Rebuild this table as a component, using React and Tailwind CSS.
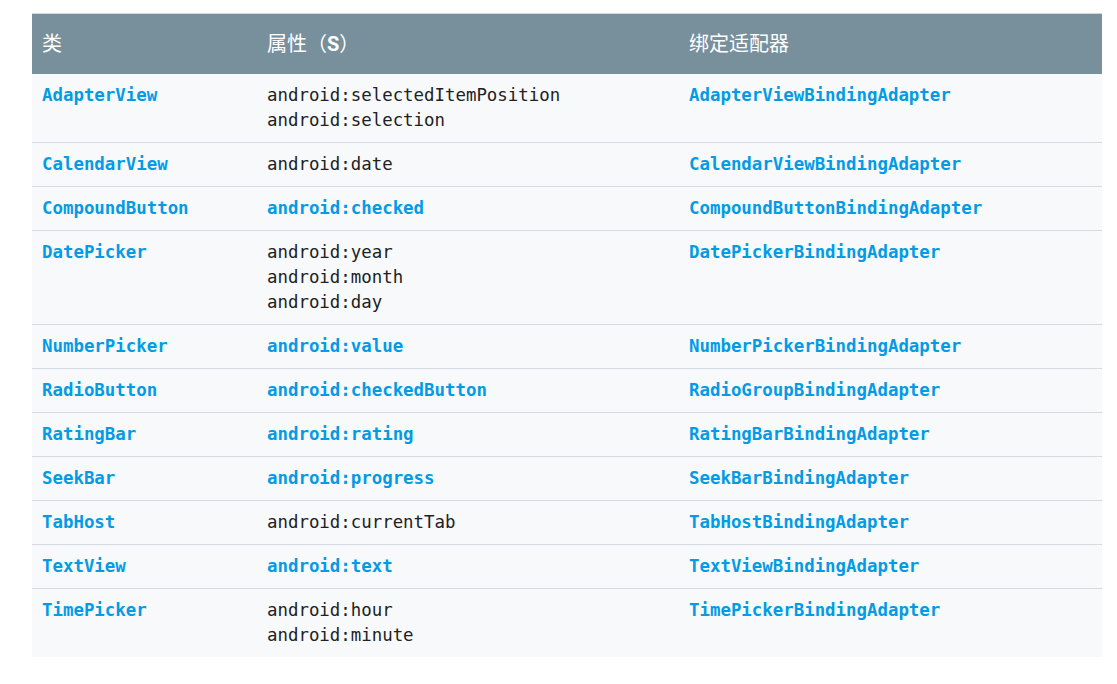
const rows = [
  { cls: 'AdapterView', attrs: ['android:selectedItemPosition', 'android:selection'], link: false, adapter: 'AdapterViewBindingAdapter' },
  { cls: 'CalendarView', attrs: ['android:date'], link: false, adapter: 'CalendarViewBindingAdapter' },
  { cls: 'CompoundButton', attrs: ['android:checked'], link: true, adapter: 'CompoundButtonBindingAdapter' },
  { cls: 'DatePicker', attrs: ['android:year', 'android:month', 'android:day'], link: false, adapter: 'DatePickerBindingAdapter' },
  { cls: 'NumberPicker', attrs: ['android:value'], link: true, adapter: 'NumberPickerBindingAdapter' },
  { cls: 'RadioButton', attrs: ['android:checkedButton'], link: true, adapter: 'RadioGroupBindingAdapter' },
  { cls: 'RatingBar', attrs: ['android:rating'], link: true, adapter: 'RatingBarBindingAdapter' },
  { cls: 'SeekBar', attrs: ['android:progress'], link: true, adapter: 'SeekBarBindingAdapter' },
  { cls: 'TabHost', attrs: ['android:currentTab'], link: false, adapter: 'TabHostBindingAdapter' },
  { cls: 'TextView', attrs: ['android:text'], link: true, adapter: 'TextViewBindingAdapter' },
  { cls: 'TimePicker', attrs: ['android:hour', 'android:minute'], link: false, adapter: 'TimePickerBindingAdapter' },
]

const mono = "font-['DejaVu_Sans_Mono','Liberation_Mono',monospace] text-[17.4px] leading-[25px]"
const linkCls = 'font-bold text-[#039be5]'

export default function App() {
  return (
    <div className="min-h-screen bg-white pt-[13px] pl-[32px]">
      <div className="w-[1070px]">
        <div className="grid grid-cols-[225px_422px_423px] bg-[#78909c] border-t border-[#cfd8dc] text-white font-['Roboto','Noto_Sans_CJK_SC',sans-serif] text-[20px] leading-[28px] font-normal">
          <div className="px-[10px] pt-[16px] pb-[16px]">类</div>
          <div className="px-[10px] pt-[16px] pb-[16px]">属性（<span className="font-bold">S</span>）</div>
          <div className="px-[10px] pt-[16px] pb-[16px]">绑定适配器</div>
        </div>
        {rows.map((r, i) => (
          <div
            key={r.cls}
            className={`grid grid-cols-[225px_422px_423px] bg-[#f8f9fa] ${mono} ${i < rows.length - 1 ? 'border-b border-[#d3dce4]' : ''}`}
          >
            <div className={`px-[10px] py-[9px] ${linkCls}`}>{r.cls}</div>
            <div className={`px-[10px] py-[9px] ${r.link ? linkCls : 'text-[#202124]'}`}>
              {r.attrs.map((a) => (
                <div key={a}>{a}</div>
              ))}
            </div>
            <div className={`px-[10px] py-[9px] ${linkCls}`}>{r.adapter}</div>
          </div>
        ))}
      </div>
    </div>
  )
}
